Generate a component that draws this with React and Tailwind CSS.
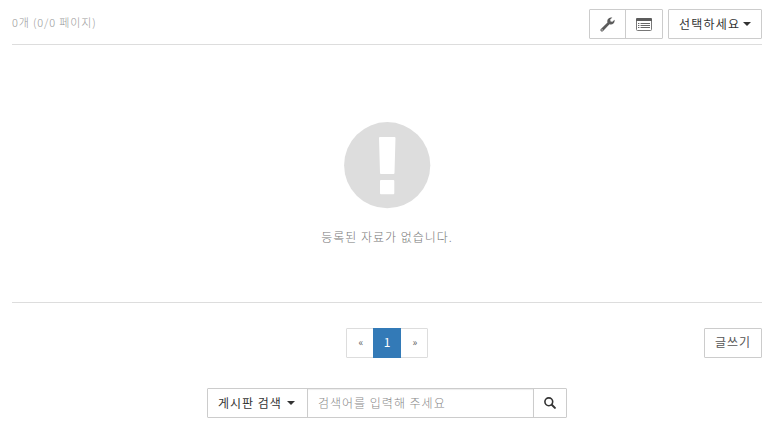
function Caret() {
  return (
    <svg className="h-1 w-2 shrink-0" viewBox="0 0 8 4" fill="#333">
      <path d="M0 0h8L4 4z" />
    </svg>
  );
}

function WrenchIcon() {
  return (
    <svg className="h-[15px] w-[15px]" viewBox="0 0 15 15">
      <path
        fill="#5c5c5c"
        d="M10.8 0.4L12.4 0.6L10.2 2.6L10.6 4.4L12.4 4.8L14.5 2.8Q15 5 13.4 6.5Q11.8 7.9 9.5 7.2L3.1 14Q1.9 15 0.8 14Q-0.1 12.9 0.9 11.9L7.5 5.6Q6.9 3.4 8 2Q9.1 0.6 10.8 0.4z"
      />
      <circle cx="2.1" cy="12.9" r="0.6" fill="#fff" />
    </svg>
  );
}

function ListIcon() {
  return (
    <svg className="h-[13px] w-4" viewBox="0 0 16 13">
      <rect x="0.5" y="0.5" width="15" height="12" rx="1" fill="#fff" stroke="#777" />
      <path d="M0 1.2Q0 0 1.2 0h13.6Q16 0 16 1.2V3H0z" fill="#5c5c5c" />
      <path d="M2 5.5h1.4M2 7.5h1.4M2 9.5h1.4M4.5 5.5H14M4.5 7.5H14M4.5 9.5H14" stroke="#666" />
    </svg>
  );
}

function SearchIcon() {
  return (
    <svg className="h-3 w-3" viewBox="0 0 12 12" fill="none" stroke="#333">
      <circle cx="4.8" cy="4.8" r="3.9" strokeWidth="1.6" />
      <path d="M7.8 7.8l3.1 3.1" strokeWidth="2" strokeLinecap="round" />
    </svg>
  );
}

function EmptyIcon() {
  return (
    <svg className="h-[87px] w-[87px]" viewBox="0 0 87 87">
      <circle cx="43.2" cy="43.2" r="43.1" fill="#ddd" />
      <g fill="#fff" stroke="#fff" strokeWidth="2" strokeLinejoin="round">
        <path d="M36 16h14.5l-1 35H37z" />
        <path d="M37 59h12.3v12.3H37z" />
      </g>
    </svg>
  );
}

export default function App() {
  return (
    <div className="h-[423px] w-[775px] overflow-hidden bg-white pl-3 pr-[13px] pt-[9px] font-['Noto_Sans_CJK_KR',sans-serif] text-[12px] leading-none tracking-[1px] text-[#333]">
      <header className="flex h-9 items-start justify-between border-b border-[#ddd]">
        <span className="mt-2 whitespace-nowrap text-[11px] font-light tracking-[0.85px] text-[#999]">0개 (0/0 페이지)</span>
        <div className="flex gap-[5px]">
          <div className="flex h-[30px] rounded-[1px] border border-[#ccc]">
            <button className="flex w-9 items-center justify-center border-r border-[#ccc]">
              <WrenchIcon />
            </button>
            <button className="flex w-9 items-center justify-center">
              <ListIcon />
            </button>
          </div>
          <button className="flex h-[30px] w-[94px] items-center justify-between rounded-[1px] border border-[#ccc] pl-2.5 pr-2.5">
            <span className="whitespace-nowrap pb-px tracking-[1.2px]">선택하세요</span>
            <Caret />
          </button>
        </div>
      </header>

      <main className="flex h-[258px] flex-col items-center border-b border-[#ddd] pt-[77px]">
        <EmptyIcon />
        <p className="mt-[22px] whitespace-nowrap font-light text-[#777]">등록된 자료가 없습니다.</p>
      </main>

      <div className="mt-[25px] grid grid-cols-[334px_82px_1fr]">
        <span />
        <nav className="flex h-[30px] rounded-[1px] border border-[#ddd] text-[#666]">
          <button className="w-[26px] pb-0.5 pl-[3px] text-[10px]">«</button>
          <button className="-my-px w-7 bg-[#337ab7] pb-0.5 pl-px text-white">1</button>
          <button className="w-[26px] pb-0.5 pl-[3px] text-[10px]">»</button>
        </nav>
        <button className="h-[30px] w-[58px] justify-self-end whitespace-nowrap rounded-[1px] border border-[#ccc] pb-0.5 text-[#555]">글쓰기</button>
      </div>

      <form className="ml-[195px] mt-[30px] flex h-[30px] w-[360px] rounded-[1px] border border-[#ccc]">
        <button type="button" className="flex w-[100px] items-center justify-between border-r border-[#ccc] pl-2.5 pr-3">
          <span className="whitespace-nowrap pb-px">게시판 검색</span>
          <Caret />
        </button>
        <input
          className="w-[225px] px-2.5 pb-0.5 font-light shadow-[inset_0_1px_1px_rgba(0,0,0,0.075)] outline-none placeholder:text-[#888]"
          placeholder="검색어를 입력해 주세요"
        />
        <button type="button" className="flex flex-1 items-center justify-center border-l border-[#ccc] pb-px">
          <SearchIcon />
        </button>
      </form>
    </div>
  );
}
